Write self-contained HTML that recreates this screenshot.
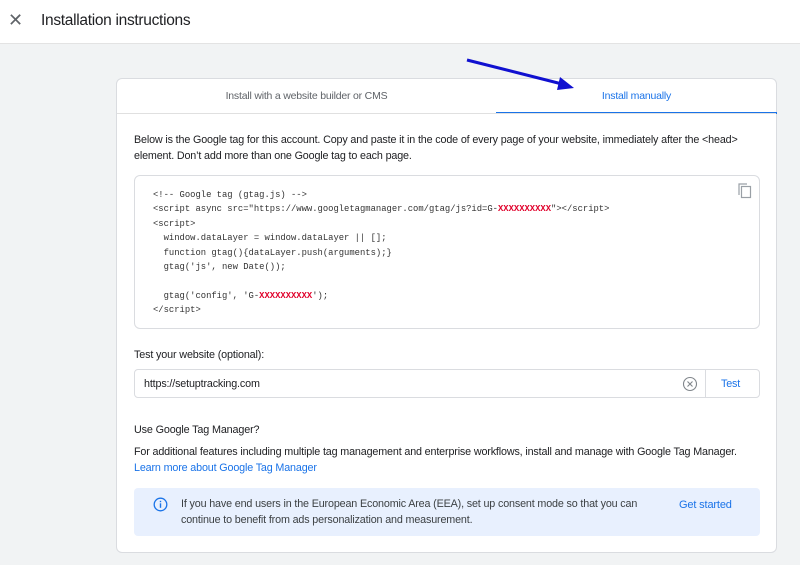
<!DOCTYPE html>
<html><head><meta charset="utf-8"><style>
*{margin:0;padding:0;box-sizing:border-box}
body{width:800px;height:565px;background:#f1f3f4;font-family:"Liberation Sans",sans-serif;color:#202124;position:relative;overflow:hidden}
.hdr{position:absolute;left:0;top:0;width:800px;height:44px;background:#fff;border-bottom:1px solid #e3e3e3}
.hdr .x{position:absolute;left:8px;top:10px;font-size:18px;color:#5f6368}
.hdr .t{position:absolute;left:41px;top:12px;font-size:15.5px;letter-spacing:-0.3px;color:#202124}
.card{position:absolute;left:116px;top:78px;width:661px;height:475px;background:#fff;border:1px solid #dadce0;border-radius:6px}
.tab{position:absolute;top:0;height:35px;font-size:10.5px;line-height:35px;text-align:center;letter-spacing:-0.2px}
.t1{left:0;width:379px;color:#5f6368}
.t2{left:379px;width:281px;color:#1a73e8;border-bottom:2px solid #1a73e8}
.line{position:absolute;left:0;top:34px;width:659px;border-top:1px solid #e0e0e0}
.p{position:absolute;font-size:10.75px;line-height:16px;letter-spacing:-0.15px;white-space:nowrap}
.code{position:absolute;left:17px;top:96px;width:626px;height:154px;border:1px solid #dadce0;border-radius:6px;font-family:"Liberation Mono",monospace;font-size:8.85px;line-height:14.4px;padding:12px 0 0 18px;white-space:pre;color:#333}
.r{color:#e0002a;font-weight:bold}
.inp{position:absolute;left:17px;top:290px;width:626px;height:29px;border:1px solid #dadce0;border-radius:4px}
.ban{position:absolute;left:17px;top:409px;width:626px;height:48px;background:#e8f0fe;border-radius:4px}
a{color:#1a73e8;text-decoration:none}
</style></head><body>
<div class="hdr"><div class="x">✕</div><div class="t">Installation instructions</div></div>
<div class="card">
<div class="tab t1">Install with a website builder or CMS</div>
<div class="tab t2">Install manually</div>
<div class="line"></div>
<div class="p" style="left:17px;top:53px">Below is the Google tag for this account. Copy and paste it in the code of every page of your website, immediately after the &lt;head&gt;<br>element. Don’t add more than one Google tag to each page.</div>
<div class="code">&lt;!-- Google tag (gtag.js) --&gt;
&lt;script async src="https://www.googletagmanager.com/gtag/js?id=G-<span class="r">XXXXXXXXXX</span>"&gt;&lt;/script&gt;
&lt;script&gt;
  window.dataLayer = window.dataLayer || [];
  function gtag(){dataLayer.push(arguments);}
  gtag('js', new Date());

  gtag('config', 'G-<span class="r">XXXXXXXXXX</span>');
&lt;/script&gt;<svg style="position:absolute;left:602px;top:6px" width="16" height="18" viewBox="0 0 16 18"><rect x="4.5" y="4.5" width="9" height="11" fill="none" stroke="#9aa0a6" stroke-width="1.2"/><path d="M2 13V2h8" fill="none" stroke="#9aa0a6" stroke-width="1.2"/></svg></div>
<div class="p" style="left:17px;top:268px;font-size:10.8px">Test your website (optional):</div>
<div class="inp"><div class="p" style="left:9px;top:6px">https://setuptracking.com</div>
<svg style="position:absolute;left:547px;top:6px" width="16" height="16" viewBox="0 0 16 16"><circle cx="8" cy="8" r="6.5" fill="none" stroke="#80868b" stroke-width="1.1"/><path d="M5.5 5.5l5 5M10.5 5.5l-5 5" stroke="#80868b" stroke-width="1.1"/></svg>
<div style="position:absolute;left:570px;top:0;height:27px;border-left:1px solid #dadce0"></div>
<div class="p" style="left:586px;top:6px;color:#1a73e8">Test</div></div>
<div class="p" style="left:17px;top:343px;font-size:10.8px">Use Google Tag Manager?</div>
<div class="p" style="left:17px;top:365px">For additional features including multiple tag management and enterprise workflows, install and manage with Google Tag Manager.<br><a>Learn more about Google Tag Manager</a></div>
<div class="ban">
<svg style="position:absolute;left:19px;top:9px" width="15" height="15" viewBox="0 0 15 15"><circle cx="7.5" cy="7.5" r="6.3" fill="none" stroke="#1a73e8" stroke-width="1.3"/><rect x="6.8" y="6.3" width="1.4" height="4.5" fill="#1a73e8"/><rect x="6.8" y="3.8" width="1.4" height="1.4" fill="#1a73e8"/></svg>
<div class="p" style="left:47px;top:8px;color:#3c4043">If you have end users in the European Economic Area (EEA), set up consent mode so that you can<br>continue to benefit from ads personalization and measurement.</div>
<div class="p" style="left:545px;top:9px;color:#1a73e8;font-size:11px">Get started</div>
</div>
</div>
<svg style="position:absolute;left:0;top:0" width="800" height="565"><line x1="467" y1="60" x2="566" y2="85" stroke="#1010d0" stroke-width="3"/><path d="M574 88 L560 77 L557 90 Z" fill="#1010d0"/></svg>
</body></html>
